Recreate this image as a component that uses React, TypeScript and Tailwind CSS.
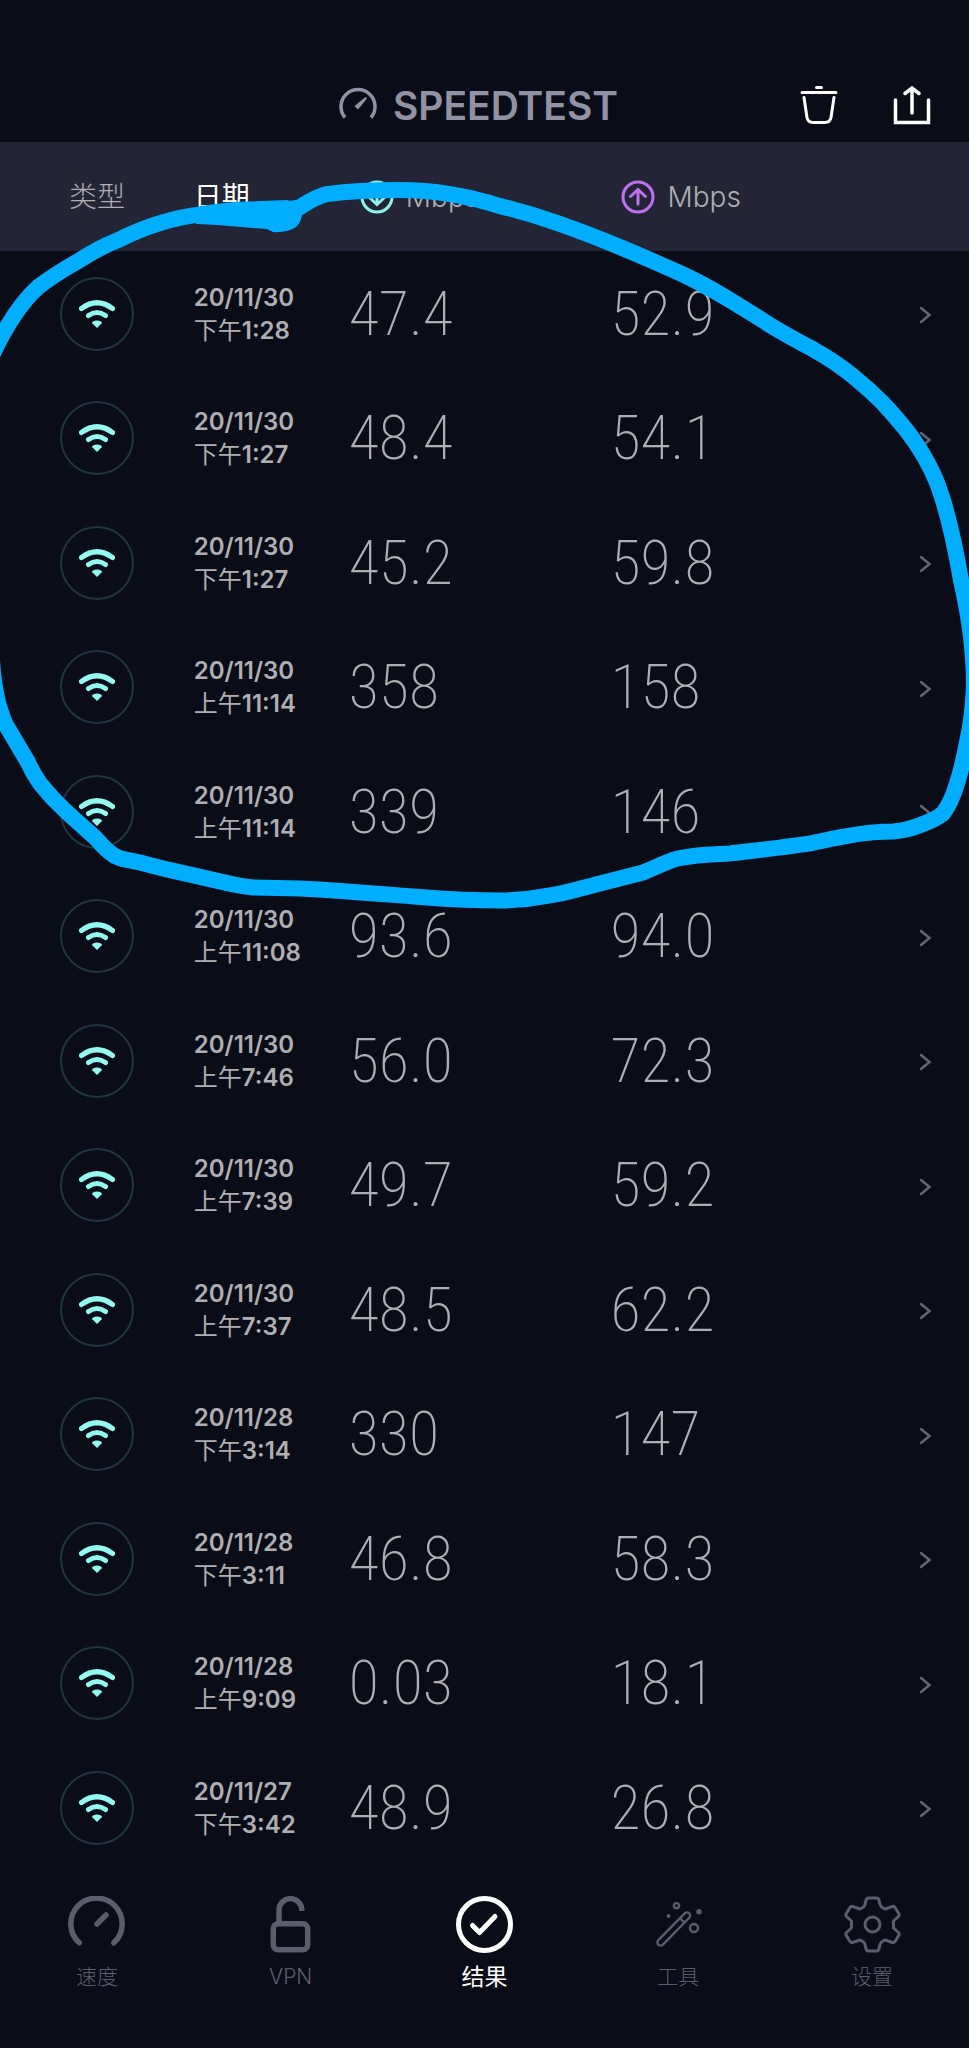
import type { ReactNode } from 'react';
import clsx from 'clsx';

interface Result {
  date: string;
  meridiem: string;
  time: string;
  down: string;
  up: string;
}

const results: Result[] = [
  { date: '20/11/30', meridiem: '下午', time: '1:28', down: '47.4', up: '52.9' },
  { date: '20/11/30', meridiem: '下午', time: '1:27', down: '48.4', up: '54.1' },
  { date: '20/11/30', meridiem: '下午', time: '1:27', down: '45.2', up: '59.8' },
  { date: '20/11/30', meridiem: '上午', time: '11:14', down: '358', up: '158' },
  { date: '20/11/30', meridiem: '上午', time: '11:14', down: '339', up: '146' },
  { date: '20/11/30', meridiem: '上午', time: '11:08', down: '93.6', up: '94.0' },
  { date: '20/11/30', meridiem: '上午', time: '7:46', down: '56.0', up: '72.3' },
  { date: '20/11/30', meridiem: '上午', time: '7:39', down: '49.7', up: '59.2' },
  { date: '20/11/30', meridiem: '上午', time: '7:37', down: '48.5', up: '62.2' },
  { date: '20/11/28', meridiem: '下午', time: '3:14', down: '330', up: '147' },
  { date: '20/11/28', meridiem: '下午', time: '3:11', down: '46.8', up: '58.3' },
  { date: '20/11/28', meridiem: '上午', time: '9:09', down: '0.03', up: '18.1' },
  { date: '20/11/27', meridiem: '下午', time: '3:42', down: '48.9', up: '26.8' },
];

function Logo() {
  return (
    <svg width="38" height="33" viewBox="0 0 38 33" fill="none" aria-hidden="true" className="mb-1">
      <path d="M6 30.5A17 17 0 1 1 32 30.5" stroke="currentColor" strokeWidth="3.5" />
      <path d="M26.5 10L28 11.5L19 22.5L15.5 19Z" fill="currentColor" />
    </svg>
  );
}

function TrashIcon() {
  return (
    <svg width="38" height="39" viewBox="0 0 38 39" fill="none" stroke="currentColor" strokeWidth="3" strokeLinecap="round">
      <path d="M16.5 1.5H21.5M2 6.5H36M4 11.5L7 31.5Q8 36.5 13 36.5H25Q30 36.5 31 31.5L34 11.5" />
    </svg>
  );
}

function ShareIcon() {
  return (
    <svg width="38" height="39" viewBox="0 0 38 39" fill="none" stroke="currentColor" strokeWidth="3.5" strokeLinecap="round">
      <path d="M2.5 14V36.5H35.5V14M19 27V3M12 7.5L19 2L26 7.5" />
    </svg>
  );
}

function ArrowCircle({ up }: { up?: boolean }) {
  return (
    <svg
      width="34"
      height="34"
      viewBox="0 0 34 34"
      fill="none"
      stroke="currentColor"
      strokeWidth="3"
      strokeLinecap="round"
      className={up ? 'text-[#bf71f2]' : 'text-[#8ef5ee]'}
      aria-hidden="true"
    >
      <circle cx="17" cy="17" r="15" />
      {up ? <path d="M17 24V10M9.5 16.5L17 9.5L24.5 16.5" /> : <path d="M17 10V24M9.5 17.5L17 24.5L24.5 17.5" />}
    </svg>
  );
}

function WifiIcon() {
  return (
    <svg width="36" height="28" viewBox="0 0 36 28" fill="none" stroke="#93faf1" role="img" aria-label="Wi-Fi">
      <path d="M2.5 8.5Q18 -3 33.5 8.5" strokeWidth="5.2" strokeLinecap="round" />
      <path d="M9.5 15.5Q18 9.5 26.5 15.5" strokeWidth="5" strokeLinecap="round" />
      <path d="M18 28L13.3 23.2Q12.8 22.4 13.6 21.8Q18 19 22.4 21.8Q23.2 22.4 22.7 23.2Z" fill="#93faf1" stroke="none" />
    </svg>
  );
}

function NavIcon({ width, children }: { width: number; children: ReactNode }) {
  return (
    <svg
      width="57"
      height="57"
      viewBox="0 0 57 57"
      fill="none"
      stroke="currentColor"
      strokeWidth={width}
      strokeLinecap="round"
      strokeLinejoin="round"
      aria-hidden="true"
    >
      {children}
    </svg>
  );
}

const tabs = [
  {
    label: '速度',
    icon: (
      <NavIcon width={5.5}>
        <path d="M11.2 46.8A25.7 25.7 0 1 1 45.8 46.8M29 28L38 19" />
      </NavIcon>
    ),
  },
  {
    label: 'VPN',
    icon: (
      <NavIcon width={5.5}>
        <rect x="11.3" y="27.8" width="34.4" height="26" rx="5" />
        <path d="M17 27V14A11.4 11.4 0 0 1 39.8 14V15" strokeLinecap="butt" />
      </NavIcon>
    ),
  },
  {
    label: '结果',
    active: true,
    icon: (
      <NavIcon width={5}>
        <circle cx="28.5" cy="28.5" r="26" />
        <path d="M16.5 29.5L23.5 36.5L39 20.5" />
      </NavIcon>
    ),
  },
  {
    label: '工具',
    icon: (
      <NavIcon width={2.4}>
        <g transform="translate(10.5 46.5) rotate(-45.5)">
          <rect x="-3" y="-3.2" width="44" height="6.4" rx="3.2" />
          <path d="M31 -3V3" />
        </g>
        <circle cx="26.5" cy="9.7" r="2.6" />
        <circle cx="44" cy="32" r="4" />
        <circle cx="49" cy="15.7" r="2.7" fill="currentColor" stroke="none" />
        <circle cx="18.5" cy="20" r="1.9" fill="currentColor" stroke="none" />
      </NavIcon>
    ),
  },
  {
    label: '设置',
    icon: (
      <NavIcon width={3}>
        <path d="M24 2H33Q34.3 2 34.7 3.5L36.2 9Q37 11 39 12L41 13L48.5 10.5Q50 10 51 11.5L55 18Q55.5 19.5 54.5 20.5L49.5 25V32L54.5 36.5Q55.5 37.5 55 39L51 45.5Q50 47 48.5 46.5L41 44L39 45Q37 46 36.2 48L34.7 53.5Q34.3 55 33 55H24Q22.7 55 22.3 53.5L20.8 48Q20 46 18 45L16 44L8.5 46.5Q7 47 6 45.5L2 39Q1.5 37.5 2.5 36.5L7.5 32V25L2.5 20.5Q1.5 19.5 2 18L6 11.5Q7 10 8.5 10.5L16 13L18 12Q20 11 20.8 9L22.3 3.5Q22.7 2 24 2Z" />
        <circle cx="28.5" cy="28.5" r="7.5" />
      </NavIcon>
    ),
  },
];

function ResultRow({ result }: { result: Result }) {
  return (
    <tr className="odd:h-[125px] even:h-[124px]">
      <td>
        <div className="mx-auto flex size-[74px] items-center justify-center rounded-full border-2 border-[#20363e]">
          <WifiIcon />
        </div>
      </td>
      <td className="text-2xl leading-[33px] font-semibold">
        <div>{result.date}</div>
        <div>
          <span className="font-normal">{result.meridiem}</span>
          {result.time}
        </div>
      </td>
      <td className="font-['Roboto_Condensed',Roboto,sans-serif] text-[62px] leading-none font-extralight">{result.down}</td>
      <td className="font-['Roboto_Condensed',Roboto,sans-serif] text-[62px] leading-none font-extralight">{result.up}</td>
      <td className="pr-[37px] text-right">
        <button type="button" aria-label="详情" className="inline-block align-middle text-[#65656f]">
          <svg width="13" height="18" viewBox="0 0 13 18" fill="none" stroke="currentColor" strokeWidth="2.5" strokeLinecap="round">
            <path d="M2 2L10.5 9L2 16" />
          </svg>
        </button>
      </td>
    </tr>
  );
}

// freehand marker drawn over the first five results
function Marker() {
  return (
    <svg
      className="pointer-events-none absolute inset-0 h-full w-full"
      viewBox="0 0 969 2048"
      preserveAspectRatio="none"
      fill="none"
      aria-hidden="true"
    >
      <path
        d="M-12 364Q12 310 38 287C52 276 64 269 78 261C92 252 105 245 118 240Q140 229 160 223Q182 216 204 214L217 212L285 210L300 207Q315 197 327 194C350 191 375 190 400 190Q425 190 450 194Q475 198 500 206Q530 213 560 224C600 238 640 255 680 273C713 288 740 306 767 323C783 333 798 341 813 349C829 358 841 366 853 376C864 385 873 393 883 403C895 416 905 427 913 439C925 456 930 466 936 480C948 510 955 545 961 580C969 615 974 650 974 685C973 710 971 725 967 742Q962 768 957 783Q951 803 943 813Q936 819 922 824Q908 830 893 831Q883 831 873 832C850 834 830 839 810 843C785 847 755 850 730 853C712 854 695 854 678 858C664 862 654 868 643 872L600 883C580 888 565 893 550 895Q525 900 500 900C460 900 440 898 413 896C375 893 340 890 300 888L253 887Q242 886 233 884L167 869L140 862C128 859 119 860 110 852C103 847 99 841 95 837L67 812Q52 798 40 783Q33 773 28 762L5 723C-2 705 -6 690 -8 660"
        stroke="#00aeff"
        strokeWidth="16"
        strokeLinejoin="round"
      />
      <path d="M200 206L233 202L287 200L295 202L303 209Q302 222 296 227Q288 233 273 232L267 229L217 225L196 224Z" fill="#00aeff" />
    </svg>
  );
}

export default function App() {
  return (
    <div className="relative flex min-h-screen flex-col overflow-hidden bg-[#0a0c17] font-[Inter,'Noto_Sans_CJK_SC',sans-serif] text-[#afafb3]">
      <header className="grid grid-cols-[1fr_auto_1fr] items-center px-[38px] pt-[85px] pb-4">
        <h1 className="col-start-2 mr-3 flex items-center gap-4 text-[39px] leading-[41px] font-semibold text-[#9292a6]">
          <Logo />
          SPEEDTEST
        </h1>
        <div className="flex justify-end gap-[55px] text-white">
          <button type="button" aria-label="删除">
            <TrashIcon />
          </button>
          <button type="button" aria-label="分享">
            <ShareIcon />
          </button>
        </div>
      </header>

      <table className="w-full table-fixed text-left">
        <colgroup>
          <col className="w-[20%]" />
          <col className="w-[16%]" />
          <col className="w-[27%]" />
          <col className="w-[22%]" />
          <col />
        </colgroup>
        <thead className="bg-[#232536] text-[28px] leading-9">
          <tr className="h-[109px]">
            <th scope="col" className="text-center font-light">
              类型
            </th>
            <th scope="col" className="font-normal text-white">
              日期
            </th>
            <th scope="col" className="font-light">
              <span className="flex items-center gap-3 pl-[11px]">
                <ArrowCircle />
                Mbps
              </span>
            </th>
            <th scope="col" className="font-light">
              <span className="flex items-center gap-3 pl-[11px]">
                <ArrowCircle up />
                Mbps
              </span>
            </th>
            <td />
          </tr>
        </thead>
        <tbody>
          {results.map((result, i) => (
            <ResultRow key={i} result={result} />
          ))}
        </tbody>
      </table>

      <nav className="grid grid-cols-5 pt-[26px] pb-14">
        {tabs.map((tab) => (
          <button
            key={tab.label}
            type="button"
            aria-current={tab.active ? 'page' : undefined}
            className={clsx(
              'flex flex-col items-center gap-2',
              tab.active ? 'text-[23px] leading-8 text-white' : 'text-[21px] leading-8 font-light text-[#5c5c6d]',
            )}
          >
            {tab.icon}
            {tab.label}
          </button>
        ))}
      </nav>

      <Marker />
    </div>
  );
}
